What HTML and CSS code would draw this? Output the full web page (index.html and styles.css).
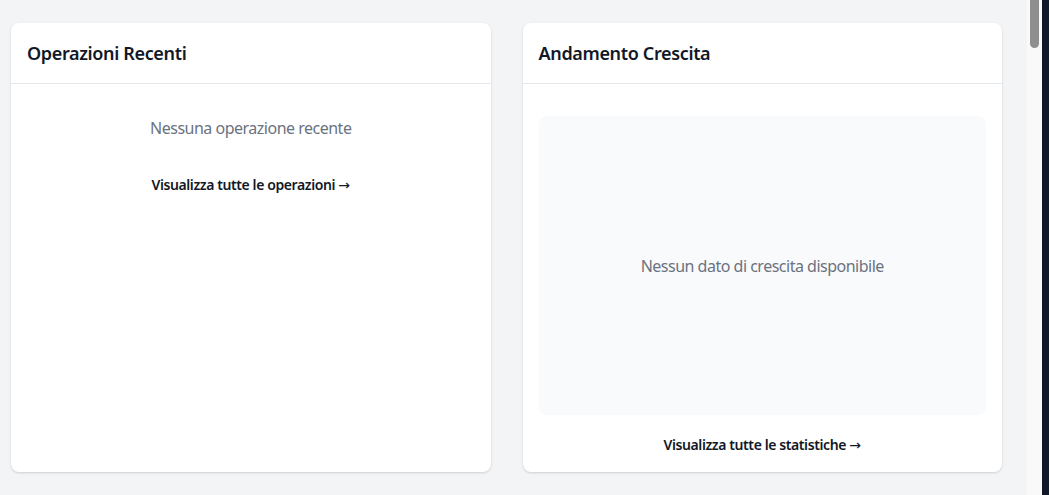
FILE: index.html
```html
<!DOCTYPE html>
<html lang="it">
<head>
<meta charset="utf-8">
<title>Dashboard</title>
<link rel="stylesheet" href="styles.css">
</head>
<body>
<div class="app">
  <main class="scroll">
    <div class="content">
      <div class="grid">
        <section class="card">
          <header class="card-header">
            <h2 class="card-title">Operazioni Recenti</h2>
          </header>
          <div class="card-body card-body--list">
            <p class="empty">Nessuna operazione recente</p>
            <a class="card-link card-link--list" href="#">Visualizza tutte le operazioni <span class="arrow">→</span></a>
          </div>
        </section>
        <section class="card">
          <header class="card-header">
            <h2 class="card-title">Andamento Crescita</h2>
          </header>
          <div class="card-body card-body--chart">
            <div class="chart-placeholder">
              <p class="empty">Nessun dato di crescita disponibile</p>
            </div>
            <a class="card-link card-link--chart" href="#">Visualizza tutte le statistiche <span class="arrow">→</span></a>
          </div>
        </section>
      </div>
    </div>
  </main>
  <div class="scrollbar"><div class="scrollbar-thumb"></div></div>
  <aside class="rail"></aside>
</div>
</body>
</html>
```

FILE: styles.css
```css
* { box-sizing: border-box; }

html, body {
  margin: 0;
  padding: 0;
  height: 100%;
}

body {
  font-family: "Noto Sans", "Open Sans", Arial, sans-serif;
  color: #111827;
  background: #f3f4f6;
  overflow: hidden;
}

.app {
  display: flex;
  height: 100vh;
}

.scroll {
  flex: 1;
  min-width: 0;
  overflow: hidden;
  background: #f3f4f6;
}

.scrollbar {
  width: 15px;
  flex: none;
  background: #f9f9f9;
  padding: 0 3px;
}

.scrollbar-thumb {
  height: 48px;
  background: #8f8f8f;
  border-radius: 0 0 5px 5px;
}

.content {
  padding: 23px 25px 0 11px;
}

.grid {
  display: grid;
  grid-template-columns: 1fr 1fr;
  gap: 32px;
}

.card {
  background: #ffffff;
  border-radius: 8px;
  box-shadow: 0 1px 3px rgba(0, 0, 0, 0.1), 0 1px 2px rgba(0, 0, 0, 0.06);
  display: flex;
  flex-direction: column;
}

.card-header {
  padding: 16px;
  border-bottom: 1px solid #e5e7eb;
}

.card-title {
  margin: 0;
  font-size: 18px;
  line-height: 28px;
  font-weight: 600;
  letter-spacing: -0.35px;
  color: #111827;
}

.card-body {
  display: flex;
  flex-direction: column;
  align-items: center;
  padding: 32px 16px 17px;
}

.empty {
  margin: 0;
  font-size: 16px;
  line-height: 24px;
  letter-spacing: -0.5px;
  color: #6b7280;
  text-align: center;
}

.card-link {
  font-size: 14px;
  line-height: 20px;
  font-weight: 600;
  letter-spacing: -0.4px;
  color: #111827;
  text-decoration: none;
}

.arrow {
  font-family: "DejaVu Sans", sans-serif;
  font-weight: 400;
  letter-spacing: 0;
}

.card-link--list {
  margin-top: 35px;
}

.chart-placeholder {
  align-self: stretch;
  height: 299px;
  background: #f9fafb;
  border-radius: 8px;
  display: flex;
  align-items: center;
  justify-content: center;
}

.card-link--chart {
  margin-top: 20px;
}

.rail {
  width: 7px;
  flex: none;
  background: #111827;
}
```
